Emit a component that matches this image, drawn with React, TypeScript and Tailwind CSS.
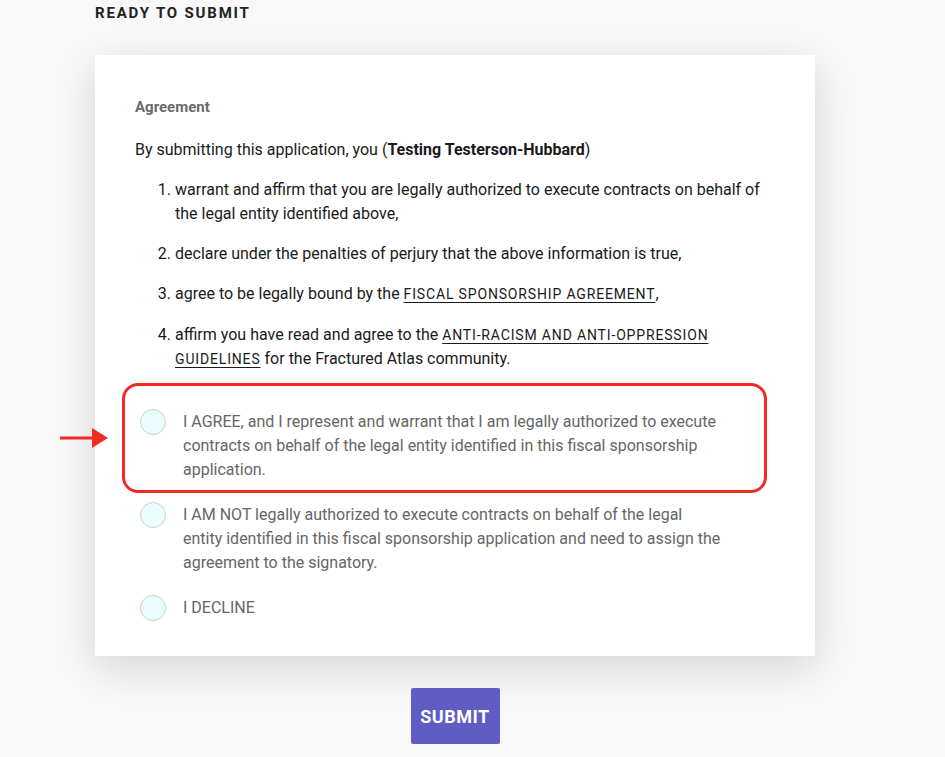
export default function App() {
    const options = [
        "I AGREE, and I represent and warrant that I am legally authorized to execute contracts on behalf of the legal entity identified in this fiscal sponsorship application.",
        "I AM NOT legally authorized to execute contracts on behalf of the legal entity identified in this fiscal sponsorship application and need to assign the agreement to the signatory.",
        "I DECLINE",
    ];

    return (
        <div className="min-h-[757px] bg-[#f8f8f8] font-['Roboto',sans-serif] relative">
            <div className="pl-[95px] pt-[4px]">
                <h2 className="text-[15px] leading-[18px] font-bold tracking-[0.12em] text-[#222] uppercase">Ready to Submit</h2>

                {/* Agreement card */}
                <div className="mt-[33px] w-[720px] bg-white pt-[42px] pb-[35px] px-10 shadow-[0_12px_40px_rgba(0,0,0,0.14)]">
                    <p className="text-[15px] leading-[20px] font-bold text-[#6b6b6b]">Agreement</p>
                    <p className="mt-[21px] text-[16px] leading-[24px] text-[#1a1a1a]">
                        By submitting this application, you (<span className="font-bold">Testing Testerson-Hubbard</span>)
                    </p>
                    <ol className="mt-[16px] list-decimal pl-[40px] space-y-[16px] text-[16px] leading-[24px] text-[#1a1a1a]">
                        <li>warrant and affirm that you are legally authorized to execute contracts on behalf of the legal entity identified above,</li>
                        <li>declare under the penalties of perjury that the above information is true,</li>
                        <li>
                            agree to be legally bound by the{" "}
                            <a className="underline underline-offset-[3px] text-[14px] uppercase tracking-[0.06em]">Fiscal Sponsorship Agreement</a>,
                        </li>
                        <li className="!mt-[17px]">
                            affirm you have read and agree to the{" "}
                            <a className="underline underline-offset-[3px] text-[14px] uppercase tracking-[0.06em]">Anti-Racism and Anti-Oppression Guidelines</a>{" "}
                            for the Fractured Atlas community.
                        </li>
                    </ol>

                    <div className="mt-[39px] pl-[5px] flex flex-col gap-[21px]">
                        {options.map((opt) => (
                            <label key={opt} className="flex items-start gap-[17px]">
                                <span className="mt-[-1px] w-[26px] h-[26px] shrink-0 rounded-full bg-[#e9fdfc] border border-[#c4d3d2]" />
                                <span className="w-[540px] text-[16px] leading-[24px] text-[#666]">{opt}</span>
                            </label>
                        ))}
                    </div>
                </div>

                <div className="w-[720px] flex justify-center mt-[32px]">
                    <button className="w-[89px] h-[56px] bg-[#5f5dc4] text-white text-[18px] font-bold tracking-[0.03em] rounded-[2px]">SUBMIT</button>
                </div>
            </div>

            {/* Annotation overlay */}
            <div className="absolute left-[122px] top-[383px] w-[645px] h-[110px] border-[3px] border-[#f22a22] rounded-[16px] pointer-events-none" />
            <svg className="absolute left-[58px] top-[426px]" width="52" height="24" viewBox="0 0 52 24">
                <line x1="2" y1="12" x2="36" y2="12" stroke="#f22a22" strokeWidth="3" />
                <polygon points="34,2 50,12 34,22" fill="#f22a22" />
            </svg>
        </div>
    );
}
